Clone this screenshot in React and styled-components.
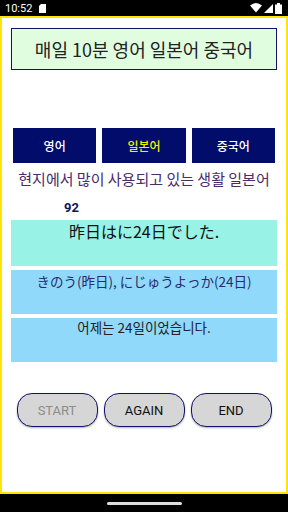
import React from 'react';
import styled, { createGlobalStyle } from 'styled-components';

const GlobalStyle = createGlobalStyle`
    html, body {
        margin: 0;
        padding: 0;
        background: #000;
    }
    #root {
        width: 288px;
        height: 512px;
    }
`;

const Screen = styled.div`
    width: 288px;
    height: 512px;
    display: flex;
    flex-direction: column;
    background: #000;
    font-family: Roboto, "Noto Sans CJK KR", "Noto Sans CJK JP", sans-serif;
`;

const StatusBar = styled.div`
    height: 16px;
    display: flex;
    align-items: center;
    justify-content: space-between;
    padding: 0 6px 0 5px;
    color: #fff;
    font-size: 11px;
`;

const StatusGroup = styled.div`
    display: flex;
    align-items: center;
    gap: ${(p) => p.gap || 6}px;
`;

const Frame = styled.div`
    flex: 1;
    border: 2px solid #ffe600;
    background: #fff;
    display: flex;
    flex-direction: column;
    padding: 0 9px;
`;

const Title = styled.div`
    margin-top: 10px;
    height: 42px;
    border: 1px solid #10126b;
    background: #e0fde0;
    box-sizing: border-box;
    display: flex;
    align-items: center;
    justify-content: center;
    font-family: "Noto Sans CJK KR", sans-serif;
    font-size: 18px;
    color: #222;
`;

const LangRow = styled.div`
    margin: 58px 2px 0;
    display: grid;
    grid-template-columns: repeat(3, 1fr);
    gap: 6px;
`;

const LangButton = styled.div`
    height: 35px;
    background: #020c6b;
    display: flex;
    align-items: center;
    justify-content: center;
    font-family: "Noto Sans CJK KR", sans-serif;
    font-size: 12px;
    font-weight: 500;
    color: ${(p) => (p.active ? '#f2f200' : '#fff')};
`;

const Subtitle = styled.div`
    margin-top: 4px;
    height: 22px;
    display: flex;
    align-items: center;
    justify-content: center;
    white-space: nowrap;
    font-family: "Noto Sans CJK KR", sans-serif;
    font-size: 15px;
    color: #4a2b6b;
`;

const Score = styled.div`
    margin: 11px 0 0 53px;
    font-size: 13px;
    font-weight: 700;
    line-height: 16px;
    color: #101460;
`;

const Cards = styled.div`
    margin-top: 4px;
    display: flex;
    flex-direction: column;
    gap: 4px;
`;

const Card = styled.div`
    height: ${(p) => p.h}px;
    background: ${(p) => p.bg};
    text-align: center;
    font-family: "Noto Sans CJK JP", "Noto Sans CJK KR", sans-serif;
    font-size: ${(p) => p.size}px;
    color: ${(p) => p.color};
    padding-top: ${(p) => p.pad}px;
    box-sizing: border-box;
    line-height: 1.3;
`;

const ButtonRow = styled.div`
    margin: 31px 5px 0 5px;
    display: grid;
    grid-template-columns: repeat(3, 81px);
    gap: 6px;
    justify-content: center;
`;

const ActionButton = styled.div`
    height: 34px;
    border: 1px solid #11116e;
    border-radius: 15px;
    background: #d6d6d6;
    box-sizing: border-box;
    box-shadow: 0 1px 2px rgba(0, 0, 0, 0.3);
    display: flex;
    align-items: center;
    justify-content: center;
    font-size: 13px;
    font-weight: 400;
    color: ${(p) => (p.disabled ? '#8c8c8c' : '#111')};
`;

const NavBar = styled.div`
    height: 18px;
    display: flex;
    align-items: center;
    justify-content: center;
`;

const Handle = styled.div`
    width: 75px;
    height: 3px;
    border-radius: 2px;
    background: #ddd;
`;

const Icon = ({ children, w, h }) => (
    <svg width={w} height={h} viewBox={`0 0 ${w} ${h}`} fill="#fff">
        {children}
    </svg>
);

const App = () => (
    <>
        <GlobalStyle />
        <Screen>
            <StatusBar>
                <StatusGroup gap={7}>
                    <span>10:52</span>
                    <Icon w={7} h={9}>
                        <path d="M2 0h5v9H0V2z" />
                    </Icon>
                </StatusGroup>
                <StatusGroup gap={2}>
                    <Icon w={12} h={10}>
                        <path d="M0 2.5Q6 -2.5 12 2.5L6 9.5z" />
                    </Icon>
                    <Icon w={9} h={9}>
                        <path d="M0 9L9 0v9z" />
                    </Icon>
                    <Icon w={7} h={11}>
                        <path d="M2 0h3v1.5h2V11H0V1.5h2z" />
                    </Icon>
                </StatusGroup>
            </StatusBar>
            <Frame>
                <Title>매일 10분 영어 일본어 중국어</Title>
                <LangRow>
                    <LangButton>영어</LangButton>
                    <LangButton active>일본어</LangButton>
                    <LangButton>중국어</LangButton>
                </LangRow>
                <Subtitle>현지에서 많이 사용되고 있는 생활 일본어</Subtitle>
                <Score>92</Score>
                <Cards>
                    <Card h={46} bg="#98f2e6" size={16} color="#111" pad={1}>
                        昨日はに24日でした.
                    </Card>
                    <Card h={44} bg="#90d9fb" size={13.5} color="#2a2a6a" pad={3}>
                        きのう(昨日), にじゅうよっか(24日)
                    </Card>
                    <Card h={44} bg="#90d9fb" size={13.5} color="#222" pad={1}>
                        어제는 24일이었습니다.
                    </Card>
                </Cards>
                <ButtonRow>
                    <ActionButton disabled>START</ActionButton>
                    <ActionButton>AGAIN</ActionButton>
                    <ActionButton>END</ActionButton>
                </ButtonRow>
            </Frame>
            <NavBar>
                <Handle />
            </NavBar>
        </Screen>
    </>
);

export default App;
